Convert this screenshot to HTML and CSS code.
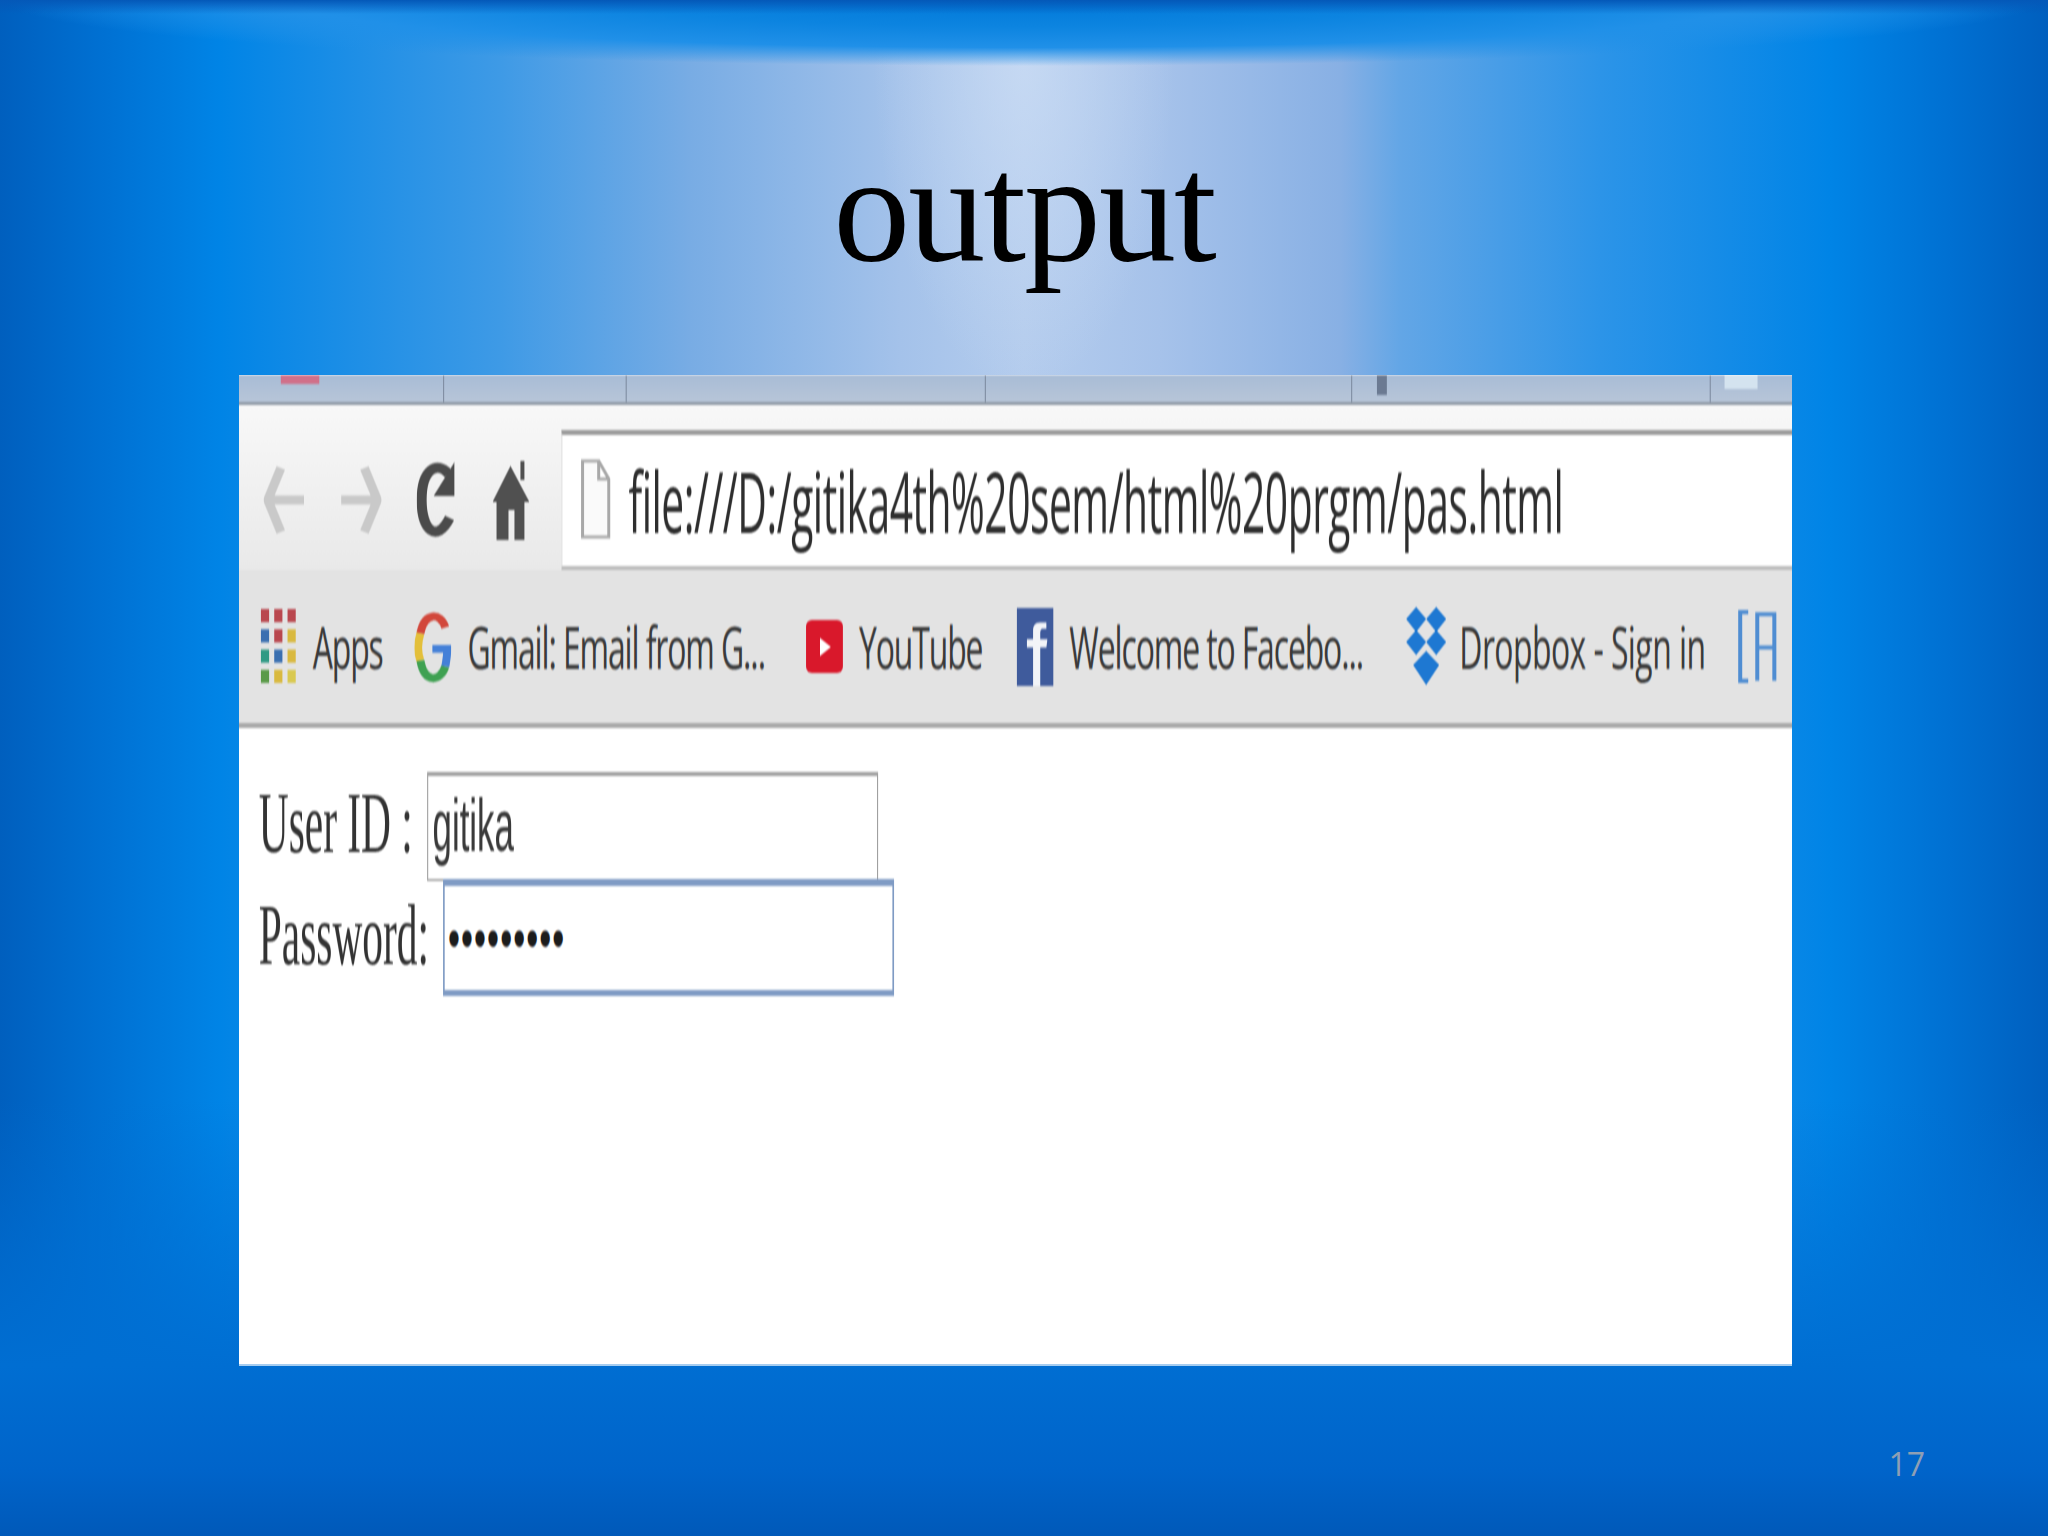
FILE: index.html
```html
<!DOCTYPE html>
<html lang="en">
<head>
<meta charset="utf-8">
<title>output</title>
<link rel="stylesheet" href="styles.css">
</head>
<body>
<main class="slide">
  <header class="title-block"><h1 class="title">output</h1></header>
  <section class="shot">
    <div class="shot-inner">
      <div class="tabs">
        <div class="tab tab-a"><span class="fav-red"></span></div>
        <div class="tab tab-b"></div>
        <div class="tab tab-c"></div>
        <div class="tab tab-d"></div>
        <div class="tab tab-e"><span class="tab-close"></span></div>
        <div class="tab tab-f"><span class="tab-glow"></span></div>
      </div>
      <div class="toolbar">
        <div class="nav">
          <svg class="ic-arrow" viewBox="0 0 41 70" preserveAspectRatio="none"><path d="M17 3 L4 35 L17 67 M8 35 H40" fill="none" stroke="#c9c9c9" stroke-width="9"/></svg>
          <svg class="ic-arrow" viewBox="0 0 41 70" preserveAspectRatio="none"><path d="M24 3 L37 35 L24 67 M1 35 H33" fill="none" stroke="#c9c9c9" stroke-width="9"/></svg>
          <svg class="ic-reload" viewBox="0 0 38 80" preserveAspectRatio="none"><path d="M32 14 C20 0 5 10 5 40 C5 70 20 84 33 58" fill="none" stroke="#4b4b4b" stroke-width="10"/><path d="M38 2 V36 H17 Z" fill="#4b4b4b"/></svg>
          <svg class="ic-home" viewBox="0 0 37 80" preserveAspectRatio="none"><path d="M18 6 L37 42 H32 V80 H22 V50 H16 V80 H4 V42 H0 Z" fill="#505050"/><path d="M28 1 H32 V20 H28 Z" fill="#505050"/></svg>
        </div>
        <div class="omnibox">
          <svg class="ic-page" viewBox="0 0 30 83" preserveAspectRatio="none"><path d="M2 2 H18 L28 20 V78 H2 Z M18 2 V20 H28" fill="#fafafa" stroke="#a8a8a8" stroke-width="3"/></svg>
          <span class="url">file:///D:/gitika4th%20sem/html%20prgm/pas.html</span>
        </div>
      </div>
      <div class="bookmarks">
        <div class="bm bm-apps">
          <svg class="ic-bm" viewBox="0 0 36 77" preserveAspectRatio="none">
            <g fill="#b9474e"><rect x="1" y="1" width="8" height="13"/><rect x="14" y="1" width="8" height="13"/><rect x="27" y="1" width="8" height="13"/></g>
            <g><rect x="1" y="21" width="8" height="13" fill="#3a6fb0"/><rect x="14" y="21" width="8" height="13" fill="#b9474e"/><rect x="27" y="21" width="8" height="13" fill="#d9b93f"/></g>
            <g><rect x="1" y="41" width="8" height="13" fill="#2f9a84"/><rect x="14" y="41" width="8" height="13" fill="#3a6fb0"/><rect x="27" y="41" width="8" height="13" fill="#d9b93f"/></g>
            <g><rect x="1" y="61" width="8" height="13" fill="#5a9a48"/><rect x="14" y="61" width="8" height="13" fill="#d9b93f"/><rect x="27" y="61" width="8" height="13" fill="#d9c950"/></g>
          </svg>
          <span class="bm-label">Apps</span>
        </div>
        <div class="bm bm-gmail">
          <svg class="ic-bm" viewBox="0 0 37 80" preserveAspectRatio="none">
            <g fill="none" stroke-width="8">
              <path d="M31 20 C26 4 10 4 6 26" stroke="#d2473b"/>
              <path d="M6 26 C3 36 3 46 6 54" stroke="#e3bf3a"/>
              <path d="M6 54 C10 78 26 76 31 60" stroke="#3fa152"/>
              <path d="M31 60 C32 54 33 48 33 42 H18" stroke="#4480d8"/>
            </g>
          </svg>
          <span class="bm-label">Gmail: Email from G...</span>
        </div>
        <div class="bm bm-yt">
          <svg class="ic-bm ic-yt" viewBox="0 0 37 53" preserveAspectRatio="none"><rect width="37" height="53" rx="6" fill="#d9182b"/><path d="M14 18 L25 27 L14 36 Z" fill="#fff"/></svg>
          <span class="bm-label">YouTube</span>
        </div>
        <div class="bm bm-fb">
          <svg class="ic-bm" viewBox="0 0 36 75" preserveAspectRatio="none"><rect width="36" height="75" fill="#3f5b9c"/><path d="M29 14 H23 C18 14 16 17 16 22 V30 H10 V38 H16 V75 H23 V38 H29 L30 30 H23 V24 C23 21 24 20 26 20 H29 Z" fill="#f2f4f8"/></svg>
          <span class="bm-label">Welcome to Facebo...</span>
        </div>
        <div class="bm bm-db">
          <svg class="ic-bm ic-db" viewBox="0 0 40 80" preserveAspectRatio="none"><g fill="#1e78d2"><path d="M10 0 L20 12 L10 25 L0 12 Z"/><path d="M30 0 L40 12 L30 25 L20 12 Z"/><path d="M10 23 L20 35 L10 48 L0 35 Z"/><path d="M30 23 L40 35 L30 48 L20 35 Z"/><path d="M20 44 L33 58 L20 78 L7 58 Z"/></g></svg>
          <span class="bm-label">Dropbox - Sign in</span>
        </div>
        <svg class="ic-bm ic-last" viewBox="0 0 40 75" preserveAspectRatio="none"><path d="M11 4 H3 V70 H11 M20 70 V6 H37 V70 M20 38 H37" fill="none" stroke="#4f8dd2" stroke-width="4"/></svg>
      </div>
      <div class="page">
        <div class="row row-user">
          <div class="label-cell label-user"><span class="label label-narrow">User ID :</span></div>
          <div class="field field-user"><span class="field-text">gitika</span></div>
        </div>
        <div class="row row-pass">
          <div class="label-cell label-pass"><span class="label label-narrow">Password:</span></div>
          <div class="field field-pass">•••••••••</div>
        </div>
      </div>
    </div>
  </section>
  <footer class="foot"><span class="num">17</span></footer>
</main>
</body>
</html>
```

FILE: styles.css
```css
* { box-sizing: border-box; }
html, body { margin: 0; padding: 0; }
body { width: 2048px; height: 1536px; overflow: hidden; }

.slide {
  width: 2048px;
  height: 1536px;
  display: flex;
  flex-direction: column;
  background-repeat: no-repeat;
  background-image:
    linear-gradient(180deg, #0458b8 0, rgba(4, 88, 184, 0) 14px),
    radial-gradient(ellipse 1020px 66px at 50% 0, #0078d8 0, #0c84e0 40%, #2090e8 72%, rgba(32, 144, 232, 0) 100%),
    radial-gradient(ellipse 150px 330px at 50% 60px, rgba(205, 222, 245, 0.7) 0, rgba(205, 222, 245, 0) 100%),
    linear-gradient(180deg, rgba(0, 110, 210, 0) 1100px, #006ed2 1366px, #0064ca 1470px, #0059b9 1536px),
    linear-gradient(90deg, #005fbe 0, #0070d2 100px, #0084e6 220px, #3e9ae6 500px, #78ace4 690px, #a4c2ea 900px, #b4cced 1024px, #a6c2ea 1160px, #88b0e4 1340px, #63a6e6 1400px, #2c94e8 1600px, #0084e6 1830px, #0070d2 1950px, #005fbe 2048px);
}

.title-block {
  height: 375px;
  padding-top: 131px;
  text-align: center;
}
.title {
  margin: 0;
  font: 400 154px/1 "Liberation Serif", serif;
  letter-spacing: -2px;
  color: #000;
}

.shot {
  width: 1553px;
  height: 991px;
  margin-left: 239px;
  background: #fff;
  overflow: hidden;
  border-bottom: 2px solid #a6cdf0;
}
.shot-inner {
  width: 2824px;
  height: 1000px;
  transform: scaleX(0.55);
  transform-origin: 0 0;
  filter: blur(1.1px);
  font-family: "Open Sans", sans-serif;
}

.tabs {
  display: flex;
  height: 30px;
  background: linear-gradient(180deg, #a8bcd6, #b7c5d8);
  border-bottom: 3px solid #8f99a5;
}
.tab { border-right: 2px solid #7f8da2; }
.tab-a { width: 373px; padding-left: 76px; }
.tab-b { width: 332px; }
.tab-c { width: 653px; }
.tab-d { width: 666px; }
.tab-e { width: 652px; padding-left: 45px; }
.tab-f { flex: 1; border-right: 0; padding-left: 25px; }
.fav-red { display: block; width: 70px; height: 9px; background: #d0708a; }
.tab-close { display: block; width: 18px; height: 20px; background: #6b7a92; }
.tab-glow { display: block; width: 60px; height: 14px; background: #d4e3ef; }

.toolbar {
  display: flex;
  align-items: center;
  height: 165px;
  padding-top: 25px;
  padding-left: 45px;
  background: linear-gradient(180deg, #f8f8f8, #e9e9e9);
}
.nav { display: flex; align-items: center; }
.ic-arrow { display: block; width: 75px; height: 70px; margin-right: 64px; }
.ic-reload { display: block; width: 69px; height: 80px; margin-right: 69px; }
.ic-home { display: block; width: 67px; height: 80px; margin-right: 58px; }
.omnibox {
  flex: 1;
  display: flex;
  align-items: center;
  gap: 32px;
  height: 140px;
  padding-left: 33px;
  background: #fff;
  border-top: 5px solid #9c9c9c;
  border-bottom: 4px solid #bdbdbd;
  border-left: 2px solid #dedede;
}
.ic-page { display: block; width: 55px; height: 83px; }
.url {
  display: inline-block;
  font-size: 84px;
  letter-spacing: -1px;
  color: #2e2e2e;
  white-space: nowrap;
  transform: scaleX(0.883);
  transform-origin: 0 50%;
}

.bookmarks {
  display: flex;
  align-items: center;
  height: 158px;
  padding-left: 38px;
  background: #e3e3e3;
  border-bottom: 5px solid #a9a9a9;
}
.bm { display: flex; align-items: center; gap: 29px; color: #3a3a3a; }
.ic-bm { display: block; width: 67px; height: 78px; }
.ic-yt { height: 53px; }
.ic-db { width: 73px; height: 80px; }
.bm-label { font-size: 58px; white-space: nowrap; letter-spacing: -2px; }
.bm-db { gap: 24px; }
.bm-db .bm-label { letter-spacing: -1px; }
.bm-apps { margin-right: 58px; }
.bm-gmail { margin-right: 75px; }
.bm-yt { margin-right: 62px; }
.bm-fb { margin-right: 78px; }
.bm-db { margin-right: 58px; }
.ic-last { width: 73px; }

.page { padding: 44px 0 0 36px; color: #333; }
.row { display: flex; }
.row-pass { margin-top: -2px; }
.label-user { width: 306px; padding-top: 8px; }
.label-pass { width: 335px; padding-top: 13px; }
.label {
  display: inline-block;
  font: 400 86px/1 "Liberation Serif", serif;
  white-space: nowrap;
  transform-origin: 0 50%;
}
.label-narrow { transform: scaleX(0.875); }
.field { white-space: nowrap; background: #fff; }
.field-user {
  width: 820px;
  height: 109px;
  padding-left: 8px;
  border: 2px solid #a0a0a0;
  border-top-width: 4px;
  font: 400 74px/100px "Liberation Sans", sans-serif;
  color: #3a3a3a;
}
.field-text {
  display: inline-block;
  transform: scaleX(0.855);
  transform-origin: 0 50%;
}
.field-pass {
  width: 820px;
  height: 117px;
  padding-left: 6px;
  border: 3px solid #7f9bc4;
  border-top-width: 7px;
  border-bottom-width: 6px;
  font: 400 62px/104px "Liberation Sans", sans-serif;
  letter-spacing: 2px;
  color: #1c1c1c;
}

.foot {
  padding: 82px 123px 0 0;
  text-align: right;
}
.num {
  font: 400 32px/1 "Open Sans", sans-serif;
  color: #8e9fb4;
}
```
